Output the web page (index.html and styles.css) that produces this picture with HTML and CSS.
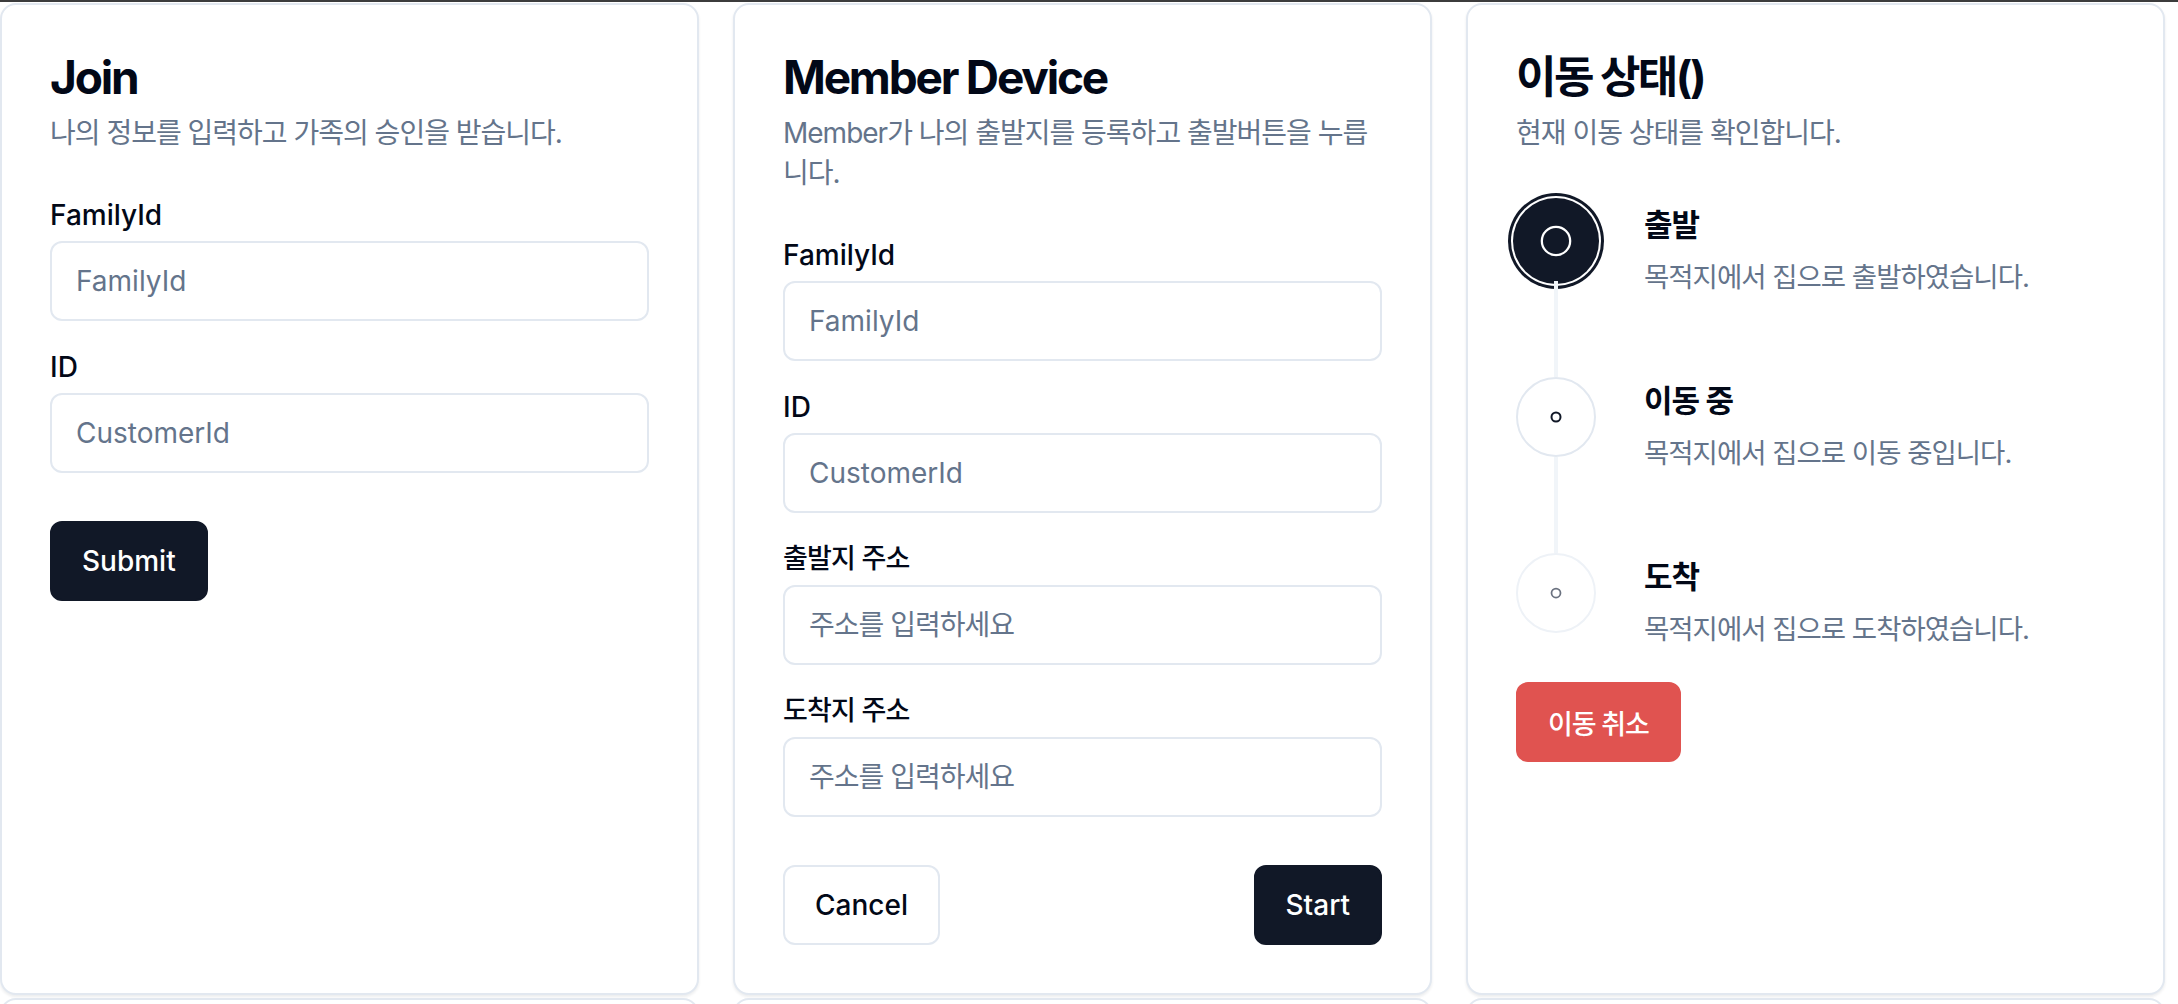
FILE: index.html
```html
<!DOCTYPE html>
<html lang="ko">
<head>
<meta charset="utf-8">
<title>Family Trip</title>
<link rel="stylesheet" href="styles.css">
</head>
<body>
<div class="topbar"></div>
<main class="board">
  <section class="card">
    <header class="card-header">
      <h2 class="card-title">Join</h2>
      <p class="card-desc">나의 정보를 입력하고 가족의 승인을 받습니다.</p>
    </header>
    <div class="card-content fields">
      <div class="field">
        <label class="label">FamilyId</label>
        <input class="input" placeholder="FamilyId">
      </div>
      <div class="field">
        <label class="label">ID</label>
        <input class="input" placeholder="CustomerId">
      </div>
    </div>
    <footer class="card-footer">
      <button class="btn btn-primary">Submit</button>
    </footer>
  </section>

  <section class="card">
    <header class="card-header">
      <h2 class="card-title">Member Device</h2>
      <p class="card-desc">Member가 나의 출발지를 등록하고 출발버튼을 누릅니다.</p>
    </header>
    <div class="card-content fields">
      <div class="field">
        <label class="label">FamilyId</label>
        <input class="input" placeholder="FamilyId">
      </div>
      <div class="field">
        <label class="label">ID</label>
        <input class="input" placeholder="CustomerId">
      </div>
      <div class="field">
        <label class="label label-ko">출발지 주소</label>
        <input class="input input-ko" placeholder="주소를 입력하세요">
      </div>
      <div class="field">
        <label class="label label-ko">도착지 주소</label>
        <input class="input input-ko" placeholder="주소를 입력하세요">
      </div>
    </div>
    <footer class="card-footer spread">
      <button class="btn btn-outline">Cancel</button>
      <button class="btn btn-primary">Start</button>
    </footer>
  </section>

  <section class="card">
    <header class="card-header">
      <h2 class="card-title title-ko">이동 상태()</h2>
      <p class="card-desc">현재 이동 상태를 확인합니다.</p>
    </header>
    <div class="card-content">
      <ol class="steps">
        <li class="step">
          <div class="rail">
            <span class="dot dot-active">
              <svg class="icon-lg" viewBox="0 0 24 24" fill="none" stroke="#ffffff" stroke-width="1.6"><circle cx="12" cy="12" r="10"/></svg>
            </span>
            <span class="line"></span>
          </div>
          <div class="step-text">
            <h3 class="step-title">출발</h3>
            <p class="step-desc">목적지에서 집으로 출발하였습니다.</p>
          </div>
        </li>
        <li class="step">
          <div class="rail">
            <span class="dot">
              <svg class="icon-sm" viewBox="0 0 24 24" fill="none" stroke="#111827" stroke-width="4"><circle cx="12" cy="12" r="9"/></svg>
            </span>
            <span class="line"></span>
          </div>
          <div class="step-text">
            <h3 class="step-title">이동 중</h3>
            <p class="step-desc">목적지에서 집으로 이동 중입니다.</p>
          </div>
        </li>
        <li class="step">
          <div class="rail">
            <span class="dot dot-faint">
              <svg class="icon-sm" viewBox="0 0 24 24" fill="none" stroke="#6b7280" stroke-width="3.5"><circle cx="12" cy="12" r="9"/></svg>
            </span>
          </div>
          <div class="step-text">
            <h3 class="step-title">도착</h3>
            <p class="step-desc">목적지에서 집으로 도착하였습니다.</p>
          </div>
        </li>
      </ol>
      <button class="btn btn-danger btn-ko">이동 취소</button>
    </div>
  </section>

  <section class="card card-next"></section>
  <section class="card card-next"></section>
  <section class="card card-next"></section>
</main>
</body>
</html>
```

FILE: styles.css
```css
html, body {
  margin: 0;
  padding: 0;
  overflow: hidden;
  background: #ffffff;
}

body {
  font-family: Inter, "Noto Sans CJK KR", "Noto Sans", sans-serif;
  color: #020817;
}

.topbar {
  height: 2px;
  background: #3c3c3c;
}

.board {
  display: grid;
  grid-template-columns: repeat(3, 699px);
  column-gap: 34px;
  row-gap: 3px;
  padding-top: 1px;
}

.card {
  display: flex;
  flex-direction: column;
  border: 2px solid #e2e8f0;
  border-radius: 16px;
  background: #ffffff;
  box-shadow: 0 2px 3px rgba(15, 23, 42, 0.08);
  box-sizing: border-box;
}

.card-next {
  height: 120px;
}

.card-header {
  padding: 48px 48px 48px;
  display: flex;
  flex-direction: column;
  gap: 12px;
}

.card-title {
  margin: 0;
  font-size: 46px;
  line-height: 48px;
  font-weight: 700;
  letter-spacing: -2.2px;
  color: #020817;
}

.title-ko {
  font-size: 44px;
  letter-spacing: -2.5px;
}

.card-desc {
  margin: 0;
  font-size: 28px;
  line-height: 40px;
  letter-spacing: -1px;
  color: #64748b;
}

.card-content {
  padding: 0 48px 48px;
}

.fields {
  display: flex;
  flex-direction: column;
  gap: 32px;
}

.field {
  display: flex;
  flex-direction: column;
  gap: 12px;
}

.label {
  font-size: 28px;
  line-height: 28px;
  font-weight: 500;
  color: #020817;
}

.label-ko {
  font-size: 27px;
  letter-spacing: -0.8px;
}

.input {
  height: 80px;
  width: 100%;
  box-sizing: border-box;
  border: 2px solid #e2e8f0;
  border-radius: 12px;
  padding: 0 24px;
  font-family: inherit;
  font-size: 28px;
  color: #020817;
  background: #ffffff;
  outline: none;
}

.input::placeholder {
  color: #64748b;
}

.input-ko {
  font-size: 28px;
  letter-spacing: -1px;
}

.card-footer {
  padding: 0 48px 48px;
  display: flex;
  align-items: center;
}

.spread {
  justify-content: space-between;
}

.btn {
  height: 80px;
  padding: 0 30px;
  border-radius: 12px;
  font-family: inherit;
  font-size: 28px;
  font-weight: 500;
  border: 2px solid transparent;
  box-sizing: border-box;
  cursor: pointer;
}

.btn-primary {
  background: #111827;
  border-color: #111827;
  color: #ffffff;
}

.btn-outline {
  background: #ffffff;
  border-color: #e2e8f0;
  color: #020817;
}

.btn-danger {
  background: #e05350;
  border-color: #e05350;
  color: #ffffff;
  margin-top: 33px;
  align-self: flex-start;
}

.btn-ko {
  font-size: 27px;
  letter-spacing: -1.2px;
}

.steps {
  list-style: none;
  margin: 0;
  padding: 0;
  display: flex;
  flex-direction: column;
}

.step {
  display: flex;
  gap: 48px;
}

.rail {
  width: 80px;
  display: flex;
  flex-direction: column;
  align-items: center;
}

.dot {
  width: 80px;
  height: 80px;
  flex: none;
  box-sizing: border-box;
  border-radius: 50%;
  border: 2px solid #e2e8f0;
  background: #ffffff;
  display: flex;
  align-items: center;
  justify-content: center;
}

.dot-active {
  width: 86px;
  height: 86px;
  margin: -3px;
  border: none;
  background: #111827;
  box-shadow: 0 0 0 2px #ffffff, 0 0 0 5px #111827;
}

.dot-faint {
  border-color: #eef2f7;
}

.icon-lg {
  width: 34px;
  height: 34px;
}

.icon-sm {
  width: 12px;
  height: 12px;
}

.line {
  width: 4px;
  height: 96px;
  background: #f1f5f9;
}

.step-text {
  padding-top: 4px;
}

.step-title {
  margin: 0;
  font-size: 31px;
  line-height: 40px;
  font-weight: 700;
  letter-spacing: -1px;
  color: #020817;
}

.step-desc {
  margin: 12px 0 0;
  font-size: 27.5px;
  line-height: 40px;
  letter-spacing: -1px;
  color: #64748b;
}
```
